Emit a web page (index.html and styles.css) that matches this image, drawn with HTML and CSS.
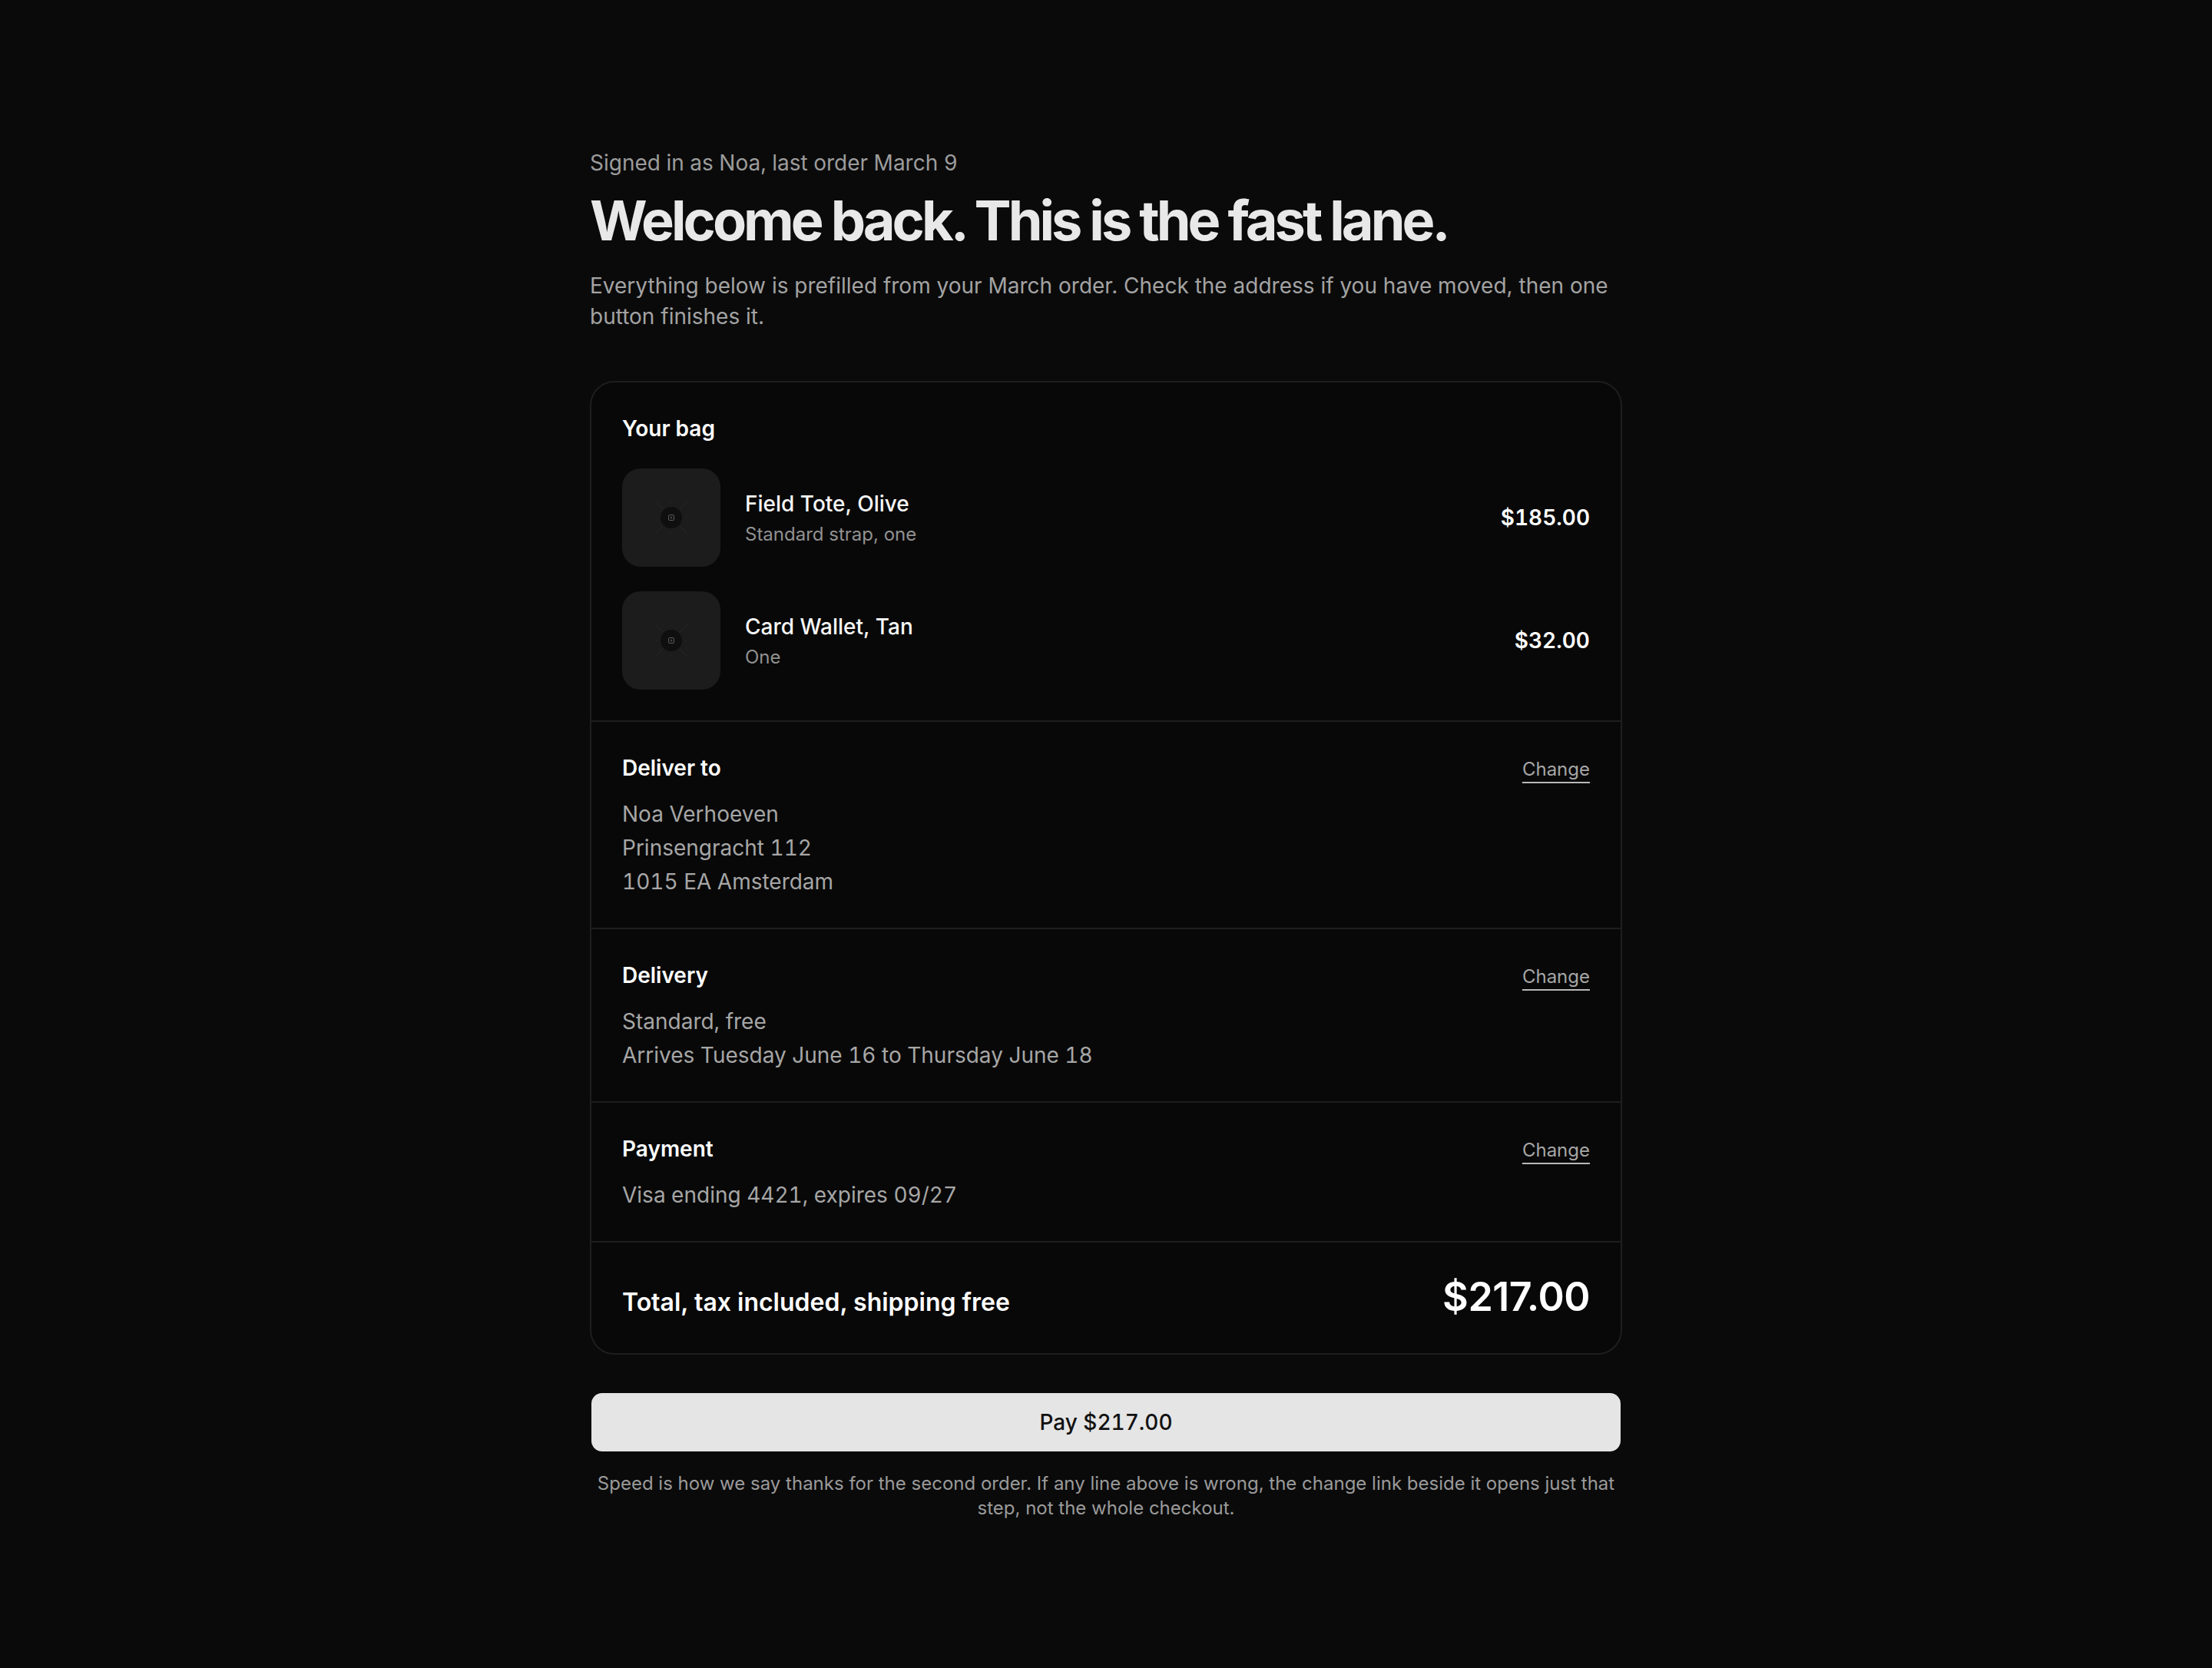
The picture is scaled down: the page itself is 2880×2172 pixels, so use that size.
FILE: index.html
```html
<!DOCTYPE html>
<html lang="en">
<head>
<meta charset="utf-8">
<title>Welcome back</title>
<link rel="stylesheet" href="styles.css">
</head>
<body>
<main class="page">
  <p class="eyebrow">Signed in as Noa, last order March 9</p>
  <h1 class="title">Welcome back. This is the fast lane.</h1>
  <p class="lead">Everything below is prefilled from your March order. Check the address if you have moved, then one button finishes it.</p>

  <section class="card">
    <div class="section">
      <h2 class="sec-title">Your bag</h2>
      <div class="items">
        <div class="item">
          <div class="thumb">
            <svg class="ph" viewBox="0 0 64 64" width="64" height="64" aria-hidden="true">
              <g stroke="#262626" stroke-width="1">
                <line x1="11" y1="11" x2="21" y2="21"/>
                <line x1="53" y1="11" x2="43" y2="21"/>
                <line x1="11" y1="53" x2="21" y2="43"/>
                <line x1="53" y1="53" x2="43" y2="43"/>
                <line x1="32" y1="12" x2="32" y2="14"/>
                <line x1="32" y1="50" x2="32" y2="52"/>
                <line x1="12" y1="32" x2="14" y2="32"/>
                <line x1="50" y1="32" x2="52" y2="32"/>
              </g>
              <circle cx="32" cy="32" r="14" fill="#0f0f0f"/>
              <rect x="28.5" y="28.5" width="7" height="7" rx="1.5" fill="none" stroke="#5a5a5a" stroke-width="1"/>
              <circle cx="32" cy="32" r="1.5" fill="#444"/>
            </svg>
          </div>
          <div class="item-text">
            <div class="item-name">Field Tote, Olive</div>
            <div class="item-sub">Standard strap, one</div>
          </div>
          <div class="item-price">$185.00</div>
        </div>
        <div class="item">
          <div class="thumb">
            <svg class="ph" viewBox="0 0 64 64" width="64" height="64" aria-hidden="true">
              <g stroke="#262626" stroke-width="1">
                <line x1="11" y1="11" x2="21" y2="21"/>
                <line x1="53" y1="11" x2="43" y2="21"/>
                <line x1="11" y1="53" x2="21" y2="43"/>
                <line x1="53" y1="53" x2="43" y2="43"/>
                <line x1="32" y1="12" x2="32" y2="14"/>
                <line x1="32" y1="50" x2="32" y2="52"/>
                <line x1="12" y1="32" x2="14" y2="32"/>
                <line x1="50" y1="32" x2="52" y2="32"/>
              </g>
              <circle cx="32" cy="32" r="14" fill="#0f0f0f"/>
              <rect x="28.5" y="28.5" width="7" height="7" rx="1.5" fill="none" stroke="#5a5a5a" stroke-width="1"/>
              <circle cx="32" cy="32" r="1.5" fill="#444"/>
            </svg>
          </div>
          <div class="item-text">
            <div class="item-name">Card Wallet, Tan</div>
            <div class="item-sub">One</div>
          </div>
          <div class="item-price">$32.00</div>
        </div>
      </div>
    </div>

    <div class="section has-lines">
      <div class="sec-head">
        <h2 class="sec-title">Deliver to</h2>
        <a class="change" href="#">Change</a>
      </div>
      <div class="lines">
        <div>Noa Verhoeven</div>
        <div>Prinsengracht 112</div>
        <div>1015 EA Amsterdam</div>
      </div>
    </div>

    <div class="section has-lines">
      <div class="sec-head">
        <h2 class="sec-title">Delivery</h2>
        <a class="change" href="#">Change</a>
      </div>
      <div class="lines">
        <div>Standard, free</div>
        <div>Arrives Tuesday June 16 to Thursday June 18</div>
      </div>
    </div>

    <div class="section has-lines">
      <div class="sec-head">
        <h2 class="sec-title">Payment</h2>
        <a class="change" href="#">Change</a>
      </div>
      <div class="lines">
        <div>Visa ending 4421, expires 09/27</div>
      </div>
    </div>

    <div class="section total">
      <div class="total-label">Total, tax included, shipping free</div>
      <div class="total-price">$217.00</div>
    </div>
  </section>

  <button class="pay" type="button">Pay $217.00</button>
  <p class="note">Speed is how we say thanks for the second order. If any line above is wrong, the change link beside it opens just that step, not the whole checkout.</p>
</main>
</body>
</html>
```

FILE: styles.css
```css
* { box-sizing: border-box; }

html, body {
  margin: 0;
  background: #0a0a0a;
}

body {
  font-family: Inter, "Noto Sans", "Liberation Sans", sans-serif;
  color: #e6e6e6;
}

.page {
  width: 1344px;
  margin: 0 auto;
  padding: 193px 0 120px;
}

.eyebrow {
  margin: 0;
  font-size: 28px;
  line-height: 39px;
  color: #9c9c9c;
  font-variant-numeric: tabular-nums;
}

.title {
  margin: 15px 0 0;
  font-size: 72px;
  line-height: 80px;
  font-weight: 700;
  letter-spacing: -4px;
  color: #e8e8e8;
}

.lead {
  margin: 26px 0 0;
  font-size: 28px;
  line-height: 39.5px;
  color: #a3a3a3;
}

.card {
  margin-top: 64px;
  border: 2px solid #1e1e1e;
  border-radius: 32px;
  background: #080808;
  overflow: hidden;
}

.section {
  padding: 40px;
}

.section + .section {
  border-top: 2px solid #1e1e1e;
}

.section.has-lines {
  padding-bottom: 38px;
}

.sec-head {
  display: flex;
  justify-content: space-between;
  align-items: baseline;
}

.sec-title {
  margin: 0;
  font-size: 28px;
  line-height: 40px;
  font-weight: 600;
  color: #ffffff;
}

.items {
  margin-top: 32px;
  display: flex;
  flex-direction: column;
  gap: 32px;
}

.item {
  display: flex;
  align-items: center;
  gap: 32px;
}

.thumb {
  width: 128px;
  height: 128px;
  flex: 0 0 128px;
  border-radius: 24px;
  background: #1c1c1c;
  display: flex;
  align-items: center;
  justify-content: center;
}

.item-text {
  flex: 1;
  display: flex;
  flex-direction: column;
  gap: 4px;
}

.item-name {
  font-size: 28px;
  line-height: 40px;
  font-weight: 500;
  color: #f7f7f7;
}

.item-sub {
  font-size: 24px;
  line-height: 32px;
  color: #919191;
}

.item-price {
  font-size: 28px;
  line-height: 40px;
  font-weight: 600;
  color: #ffffff;
  font-variant-numeric: tabular-nums;
}

.change {
  font-size: 24px;
  color: #a6a6a6;
  text-decoration: underline;
  text-decoration-color: #b8b8b8;
  text-decoration-thickness: 2px;
  text-underline-offset: 8px;
}

.lines {
  margin-top: 18px;
  font-size: 28px;
  line-height: 44px;
  color: #a6a6a6;
  font-variant-numeric: tabular-nums;
}

.total {
  display: flex;
  justify-content: space-between;
  align-items: baseline;
  padding-bottom: 42px;
}

.total-label {
  font-size: 32px;
  line-height: 46px;
  font-weight: 600;
  color: #ffffff;
}

.total-price {
  font-size: 52px;
  line-height: 62px;
  font-weight: 600;
  letter-spacing: -0.5px;
  color: #ffffff;
}

.pay {
  display: block;
  width: calc(100% - 4px);
  height: 76px;
  margin: 50px 2px 0;
  border: 0;
  border-radius: 14px;
  background: #e5e5e5;
  color: #111111;
  font-family: inherit;
  font-variant-numeric: tabular-nums;
  font-size: 28px;
  font-weight: 500;
  cursor: pointer;
}

.note {
  margin: 26px 0 0;
  text-align: center;
  font-size: 24px;
  line-height: 32px;
  color: #9a9a9a;
}
```
